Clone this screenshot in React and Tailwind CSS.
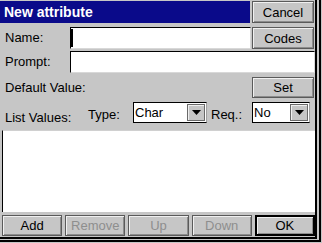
import React from "react";

const font = { fontFamily: '"Liberation Sans", Arial, sans-serif' };

function Button({ children, disabled, primary, className = "" }) {
  const border = primary
    ? "border-2 border-black"
    : "border border-[#5a5a5a]";
  return (
    <div
      className={`flex items-center justify-center bg-[#c6c6c6] text-[13px] leading-none shadow-[inset_1px_1px_0_#f0f0f0,inset_-1px_-1px_0_#8c8c8c] ${border} ${
        disabled ? "text-[#8e8e8e]" : "text-black"
      } ${className}`}
    >
      {children}
    </div>
  );
}

function Field({ className = "", caret }) {
  return (
    <div
      className={`bg-white border-t border-l border-black border-b border-r border-b-[#d8d8d8] border-r-[#d8d8d8] flex items-stretch py-[1px] ${className}`}
    >
      {caret && <div className="w-[2px] bg-black" />}
    </div>
  );
}

function Select({ value, className = "" }) {
  return (
    <div
      className={`flex items-center bg-white border border-black border-r-[#a0a0a0] pl-[1px] ${className}`}
    >
      <span className="flex-1 text-[13px] leading-none text-black">{value}</span>
      <div className="w-[18px] h-[17px] mr-[1px] bg-[#c6c6c6] border border-[#6a6a6a] shadow-[inset_1px_1px_0_#f0f0f0] flex items-center justify-center">
        <svg width="9" height="5" viewBox="0 0 9 5">
          <path d="M0 0H9L4.5 5Z" fill="#000" />
        </svg>
      </div>
    </div>
  );
}

export default function App() {
  return (
    <div className="w-[322px] h-[243px] bg-[#c6c6c6] overflow-hidden" style={font}>
      <div className="w-[321px] h-[242px] border-r-2 border-b-2 border-black pr-[2px] pb-[2px]">
        <div className="w-[317px] h-[239px] border-r-2 border-b-2 border-black">
          <div className="w-[315px] h-[237px] flex flex-col">
            {/* title */}
            <div className="mt-[1px] h-[22px] flex">
              <div className="w-[250px] bg-[#0a0a8a] text-white font-bold text-[14px] flex items-center pl-[4px]">
                New attribute
              </div>
              <Button className="ml-[2px] w-[62px]">Cancel</Button>
            </div>

            {/* name */}
            <div className="mt-[4px] h-[22px] flex items-center">
              <span className="w-[70px] pl-[5px] text-[13px] text-black">Name:</span>
              <Field caret className="w-[181px] h-full" />
              <Button className="ml-[1px] w-[62px] h-full">Codes</Button>
            </div>

            {/* prompt */}
            <div className="mt-[2px] h-[22px] flex items-center">
              <span className="w-[70px] pl-[5px] text-[13px] text-black">Prompt:</span>
              <Field className="w-[245px] h-full" />
            </div>

            {/* default value */}
            <div className="mt-[4px] h-[21px] flex items-center">
              <span className="w-[252px] pl-[5px] text-[13px] text-black">Default Value:</span>
              <Button className="w-[62px] h-full">Set</Button>
            </div>

            {/* list values / type / req */}
            <div className="mt-[4px] h-[21px] flex items-center">
              <span className="w-[88px] pl-[5px] pt-[10px] text-[13px] text-black">List Values:</span>
              <span className="w-[45px] pt-[5px] text-[13px] text-black">Type:</span>
              <Select value="Char" className="w-[74px] h-full" />
              <span className="ml-[4px] w-[41px] pt-[4px] text-[13px] text-black">Req.:</span>
              <Select value="No" className="w-[58px] h-full" />
            </div>

            {/* list */}
            <div className="mt-[7px] ml-[2px] w-[313px] h-[82px] bg-white border-l border-t border-black border-t-[#d0d0d0]" />

            {/* buttons */}
            <div className="mt-auto ml-[2px] w-[313px] h-[21px] grid grid-cols-5 gap-[3px]">
              <Button>Add</Button>
              <Button disabled>Remove</Button>
              <Button disabled>Up</Button>
              <Button disabled>Down</Button>
              <Button primary>OK</Button>
            </div>
            <div className="h-[1px]" />
          </div>
        </div>
      </div>
    </div>
  );
}
